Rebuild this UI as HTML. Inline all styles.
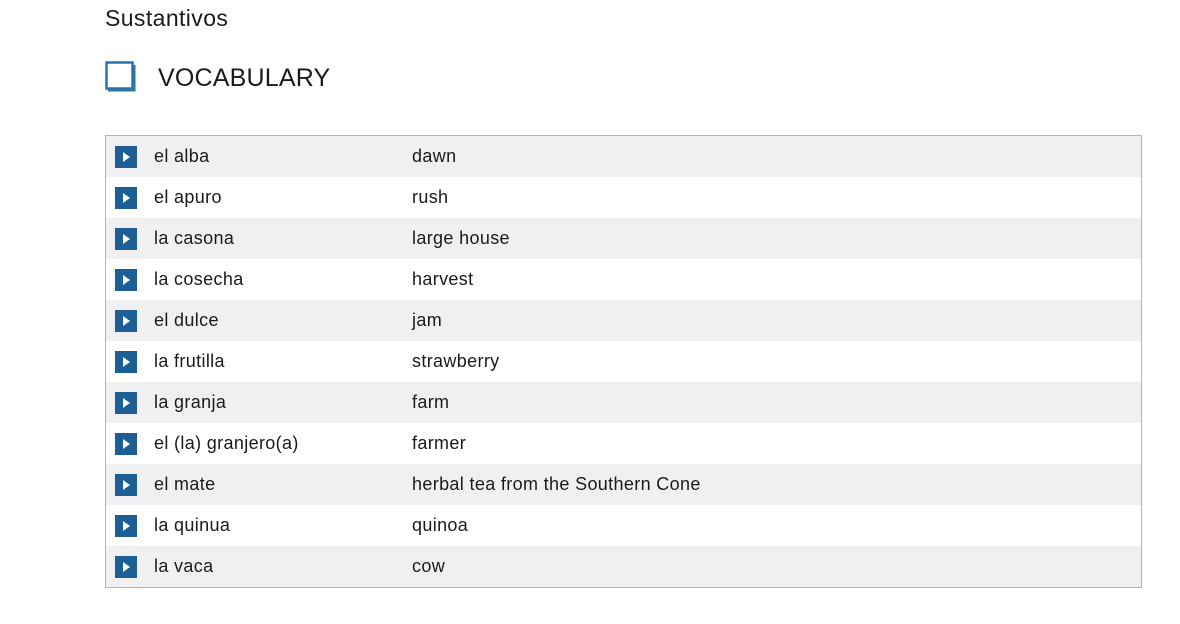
<!DOCTYPE html>
<html><head><style>
body{margin:0;background:#fff;width:1180px;height:624px;overflow:hidden;font-family:"Liberation Sans",sans-serif;color:#1a1a1a}
h1{position:absolute;left:105px;top:5px;margin:0;font-size:23px;font-weight:normal;letter-spacing:0.4px}
.voc{position:absolute;left:158px;top:64px;font-size:25px;letter-spacing:0.2px}
.book{position:absolute;left:105px;top:61px}
table{position:absolute;left:105px;top:135px;width:1037px;border:1px solid #b4b4b4;border-collapse:collapse}
td{height:41px;padding:0;font-size:18px;letter-spacing:0.35px;vertical-align:middle}
tr:nth-child(odd){background:#f0f0f2}
td.i{width:48px}
.p{display:block;margin-left:9px;width:22px;height:22px;background:#1d5f95;position:relative}
.p:after{content:"";position:absolute;left:8px;top:6px;border-left:7px solid #fff;border-top:5px solid transparent;border-bottom:5px solid transparent}
td.a{width:258px}
</style></head><body>
<h1>Sustantivos</h1>
<svg class="book" width="32" height="32" viewBox="0 0 32 32"><rect x="1.5" y="1.5" width="26" height="26" fill="none" stroke="#2a74ac" stroke-width="2.5"/><path d="M3 29.5H29.5V4" fill="none" stroke="#2a74ac" stroke-width="2"/></svg>
<div class="voc">VOCABULARY</div>
<table>
<tr><td class="i"><span class="p"></span></td><td class="a">el alba</td><td>dawn</td></tr>
<tr><td class="i"><span class="p"></span></td><td class="a">el apuro</td><td>rush</td></tr>
<tr><td class="i"><span class="p"></span></td><td class="a">la casona</td><td>large house</td></tr>
<tr><td class="i"><span class="p"></span></td><td class="a">la cosecha</td><td>harvest</td></tr>
<tr><td class="i"><span class="p"></span></td><td class="a">el dulce</td><td>jam</td></tr>
<tr><td class="i"><span class="p"></span></td><td class="a">la frutilla</td><td>strawberry</td></tr>
<tr><td class="i"><span class="p"></span></td><td class="a">la granja</td><td>farm</td></tr>
<tr><td class="i"><span class="p"></span></td><td class="a">el (la) granjero(a)</td><td>farmer</td></tr>
<tr><td class="i"><span class="p"></span></td><td class="a">el mate</td><td>herbal tea from the Southern Cone</td></tr>
<tr><td class="i"><span class="p"></span></td><td class="a">la quinua</td><td>quinoa</td></tr>
<tr><td class="i"><span class="p"></span></td><td class="a">la vaca</td><td>cow</td></tr>
</table>
</body></html>
